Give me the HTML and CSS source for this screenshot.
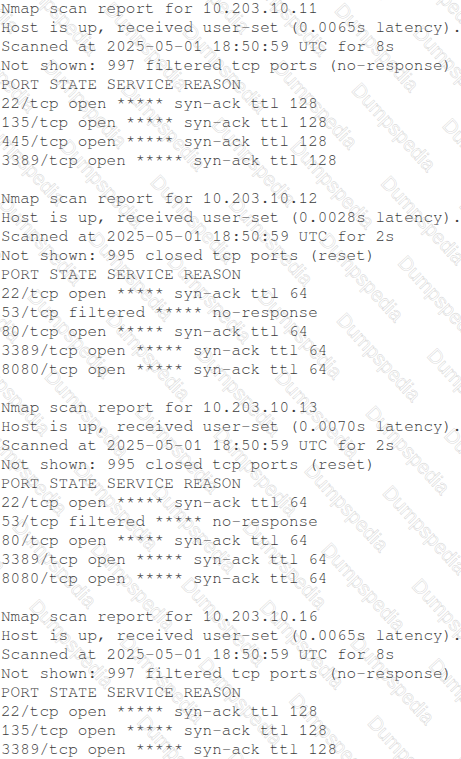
FILE: index.html
```html
<!DOCTYPE html>
<html lang="en">
<head>
<meta charset="utf-8">
<title>Nmap scan report</title>
<link rel="stylesheet" href="styles.css">
</head>
<body>
<main class="page">
<pre class="report">Nmap scan report for 10.203.10.11
Host is up, received user-set (0.0065s latency).
Scanned at 2025-05-01 18:50:59 UTC for 8s
Not shown: 997 filtered tcp ports (no-response)
PORT STATE SERVICE REASON
22/tcp open ***** syn-ack ttl 128
135/tcp open ***** syn-ack ttl 128
445/tcp open ***** syn-ack ttl 128
3389/tcp open ***** syn-ack ttl 128</pre>
<pre class="report">Nmap scan report for 10.203.10.12
Host is up, received user-set (0.0028s latency).
Scanned at 2025-05-01 18:50:59 UTC for 2s
Not shown: 995 closed tcp ports (reset)
PORT STATE SERVICE REASON
22/tcp open ***** syn-ack ttl 64
53/tcp filtered ***** no-response
80/tcp open ***** syn-ack ttl 64
3389/tcp open ***** syn-ack ttl 64
8080/tcp open ***** syn-ack ttl 64</pre>
<pre class="report">Nmap scan report for 10.203.10.13
Host is up, received user-set (0.0070s latency).
Scanned at 2025-05-01 18:50:59 UTC for 2s
Not shown: 995 closed tcp ports (reset)
PORT STATE SERVICE REASON
22/tcp open ***** syn-ack ttl 64
53/tcp filtered ***** no-response
80/tcp open ***** syn-ack ttl 64
3389/tcp open ***** syn-ack ttl 64
8080/tcp open ***** syn-ack ttl 64</pre>
<pre class="report">Nmap scan report for 10.203.10.16
Host is up, received user-set (0.0065s latency).
Scanned at 2025-05-01 18:50:59 UTC for 8s
Not shown: 997 filtered tcp ports (no-response)
PORT STATE SERVICE REASON
22/tcp open ***** syn-ack ttl 128
135/tcp open ***** syn-ack ttl 128
3389/tcp open ***** syn-ack ttl 128</pre>
</main>
<div class="watermark" aria-hidden="true">
  <div class="wm-field">
    <div class="wm-row">Dumpspedia Dumpspedia Dumpspedia Dumpspedia Dumpspedia Dumpspedia Dumpspedia Dumpspedia Dumpspedia Dumpspedia Dumpspedia Dumpspedia</div>
    <div class="wm-row shift">Dumpspedia Dumpspedia Dumpspedia Dumpspedia Dumpspedia Dumpspedia Dumpspedia Dumpspedia Dumpspedia Dumpspedia Dumpspedia Dumpspedia</div>
    <div class="wm-row">Dumpspedia Dumpspedia Dumpspedia Dumpspedia Dumpspedia Dumpspedia Dumpspedia Dumpspedia Dumpspedia Dumpspedia Dumpspedia Dumpspedia</div>
    <div class="wm-row shift">Dumpspedia Dumpspedia Dumpspedia Dumpspedia Dumpspedia Dumpspedia Dumpspedia Dumpspedia Dumpspedia Dumpspedia Dumpspedia Dumpspedia</div>
    <div class="wm-row">Dumpspedia Dumpspedia Dumpspedia Dumpspedia Dumpspedia Dumpspedia Dumpspedia Dumpspedia Dumpspedia Dumpspedia Dumpspedia Dumpspedia</div>
    <div class="wm-row shift">Dumpspedia Dumpspedia Dumpspedia Dumpspedia Dumpspedia Dumpspedia Dumpspedia Dumpspedia Dumpspedia Dumpspedia Dumpspedia Dumpspedia</div>
    <div class="wm-row">Dumpspedia Dumpspedia Dumpspedia Dumpspedia Dumpspedia Dumpspedia Dumpspedia Dumpspedia Dumpspedia Dumpspedia Dumpspedia Dumpspedia</div>
    <div class="wm-row shift">Dumpspedia Dumpspedia Dumpspedia Dumpspedia Dumpspedia Dumpspedia Dumpspedia Dumpspedia Dumpspedia Dumpspedia Dumpspedia Dumpspedia</div>
    <div class="wm-row">Dumpspedia Dumpspedia Dumpspedia Dumpspedia Dumpspedia Dumpspedia Dumpspedia Dumpspedia Dumpspedia Dumpspedia Dumpspedia Dumpspedia</div>
    <div class="wm-row shift">Dumpspedia Dumpspedia Dumpspedia Dumpspedia Dumpspedia Dumpspedia Dumpspedia Dumpspedia Dumpspedia Dumpspedia Dumpspedia Dumpspedia</div>
    <div class="wm-row">Dumpspedia Dumpspedia Dumpspedia Dumpspedia Dumpspedia Dumpspedia Dumpspedia Dumpspedia Dumpspedia Dumpspedia Dumpspedia Dumpspedia</div>
    <div class="wm-row shift">Dumpspedia Dumpspedia Dumpspedia Dumpspedia Dumpspedia Dumpspedia Dumpspedia Dumpspedia Dumpspedia Dumpspedia Dumpspedia Dumpspedia</div>
    <div class="wm-row">Dumpspedia Dumpspedia Dumpspedia Dumpspedia Dumpspedia Dumpspedia Dumpspedia Dumpspedia Dumpspedia Dumpspedia Dumpspedia Dumpspedia</div>
    <div class="wm-row shift">Dumpspedia Dumpspedia Dumpspedia Dumpspedia Dumpspedia Dumpspedia Dumpspedia Dumpspedia Dumpspedia Dumpspedia Dumpspedia Dumpspedia</div>
    <div class="wm-row">Dumpspedia Dumpspedia Dumpspedia Dumpspedia Dumpspedia Dumpspedia Dumpspedia Dumpspedia Dumpspedia Dumpspedia Dumpspedia Dumpspedia</div>
    <div class="wm-row shift">Dumpspedia Dumpspedia Dumpspedia Dumpspedia Dumpspedia Dumpspedia Dumpspedia Dumpspedia Dumpspedia Dumpspedia Dumpspedia Dumpspedia</div>
    <div class="wm-row">Dumpspedia Dumpspedia Dumpspedia Dumpspedia Dumpspedia Dumpspedia Dumpspedia Dumpspedia Dumpspedia Dumpspedia Dumpspedia Dumpspedia</div>
    <div class="wm-row shift">Dumpspedia Dumpspedia Dumpspedia Dumpspedia Dumpspedia Dumpspedia Dumpspedia Dumpspedia Dumpspedia Dumpspedia Dumpspedia Dumpspedia</div>
    <div class="wm-row">Dumpspedia Dumpspedia Dumpspedia Dumpspedia Dumpspedia Dumpspedia Dumpspedia Dumpspedia Dumpspedia Dumpspedia Dumpspedia Dumpspedia</div>
    <div class="wm-row shift">Dumpspedia Dumpspedia Dumpspedia Dumpspedia Dumpspedia Dumpspedia Dumpspedia Dumpspedia Dumpspedia Dumpspedia Dumpspedia Dumpspedia</div>
    <div class="wm-row">Dumpspedia Dumpspedia Dumpspedia Dumpspedia Dumpspedia Dumpspedia Dumpspedia Dumpspedia Dumpspedia Dumpspedia Dumpspedia Dumpspedia</div>
    <div class="wm-row shift">Dumpspedia Dumpspedia Dumpspedia Dumpspedia Dumpspedia Dumpspedia Dumpspedia Dumpspedia Dumpspedia Dumpspedia Dumpspedia Dumpspedia</div>
    <div class="wm-row">Dumpspedia Dumpspedia Dumpspedia Dumpspedia Dumpspedia Dumpspedia Dumpspedia Dumpspedia Dumpspedia Dumpspedia Dumpspedia Dumpspedia</div>
    <div class="wm-row shift">Dumpspedia Dumpspedia Dumpspedia Dumpspedia Dumpspedia Dumpspedia Dumpspedia Dumpspedia Dumpspedia Dumpspedia Dumpspedia Dumpspedia</div>
    <div class="wm-row">Dumpspedia Dumpspedia Dumpspedia Dumpspedia Dumpspedia Dumpspedia Dumpspedia Dumpspedia Dumpspedia Dumpspedia Dumpspedia Dumpspedia</div>
    <div class="wm-row shift">Dumpspedia Dumpspedia Dumpspedia Dumpspedia Dumpspedia Dumpspedia Dumpspedia Dumpspedia Dumpspedia Dumpspedia Dumpspedia Dumpspedia</div>
    <div class="wm-row">Dumpspedia Dumpspedia Dumpspedia Dumpspedia Dumpspedia Dumpspedia Dumpspedia Dumpspedia Dumpspedia Dumpspedia Dumpspedia Dumpspedia</div>
    <div class="wm-row shift">Dumpspedia Dumpspedia Dumpspedia Dumpspedia Dumpspedia Dumpspedia Dumpspedia Dumpspedia Dumpspedia Dumpspedia Dumpspedia Dumpspedia</div>
  </div>
</div>
</body>
</html>
```

FILE: styles.css
```css
html, body {
  margin: 0;
  padding: 0;
  background: #ffffff;
}

body {
  position: relative;
  width: 461px;
  height: 759px;
  overflow: hidden;
}

.page {
  display: flex;
  flex-direction: column;
  gap: 19px;
  margin-top: -1px;
  padding: 0 0 0 1px;
}

.report {
  margin: 0;
  font-family: "Nimbus Mono PS", "Nimbus Mono L", "FreeMono", "Courier New", "Liberation Mono", monospace;
  font-size: 16px;
  line-height: 19px;
  color: #3a3a3a;
  white-space: pre;
}

.watermark {
  position: absolute;
  inset: 0;
  overflow: hidden;
  pointer-events: none;
}

.wm-field {
  position: absolute;
  left: -500px;
  top: -520px;
  width: 1600px;
  display: flex;
  flex-direction: column;
  gap: 22px;
  transform: rotate(47deg);
  transform-origin: center center;
}

.wm-row {
  font-family: "Liberation Sans", Arial, sans-serif;
  font-size: 20px;
  line-height: 20px;
  white-space: nowrap;
  word-spacing: 40px;
  color: rgba(255, 255, 255, 0);
  -webkit-text-stroke: 0.6px rgba(150, 150, 150, 0.35);
}

.wm-row.shift {
  padding-left: 70px;
}
```
